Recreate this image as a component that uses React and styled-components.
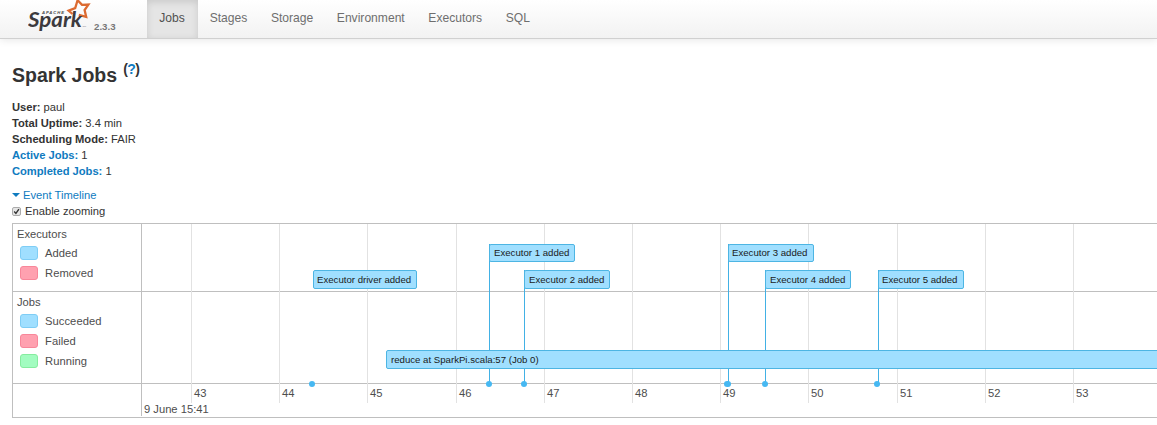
import React from "react";
import styled, { createGlobalStyle } from "styled-components";

const GlobalStyle = createGlobalStyle`
  * { box-sizing: border-box; }
  body {
    margin: 0;
    overflow: hidden;
    background: #fff;
    color: #333;
    font: 11.2px/16px "Liberation Sans", Arial, sans-serif;
  }
  b { letter-spacing: -0.03px; }
`;

const Navbar = styled.header`
  display: flex;
  height: 39px;
  padding-left: 28px;
  background: linear-gradient(to bottom, #fff, #f2f2f2);
  border-bottom: 1px solid #d0d0d0;
  box-shadow: 0 1px 8px rgba(0, 0, 0, 0.1);
`;

const Brand = styled.div`
  display: flex;
  width: 119px;
`;

const Logo = styled.svg`
  display: block;
  width: 64px;
  height: 38px;
`;

const Version = styled.span`
  margin: 19px 0 0 2px;
  font-size: 9.7px;
  font-weight: bold;
  color: #777;
`;

const Nav = styled.nav`
  display: flex;
`;

const NavItem = styled.a`
  padding: 0 11.8px;
  font-size: 12.1px;
  line-height: 36px;
  color: ${(p) => (p.$active ? "#505050" : "#6e6e6e")};
  background: ${(p) => (p.$active ? "#e5e5e5" : "none")};
  box-shadow: ${(p) => (p.$active ? "inset 0 2px 7px rgba(0, 0, 0, 0.125)" : "none")};
  &:first-child { padding: 0 13.1px 0 12.2px; }
`;

const Page = styled.main`
  padding: 24px 0 0 12px;
`;

const Title = styled.h3`
  display: flex;
  height: 36px;
  margin: 0;
  font-size: 19.5px;
  line-height: 24px;
`;

const Help = styled.sup`
  margin-left: 6px;
  font-size: 14px;
  line-height: 12px;
  letter-spacing: -0.6px;
  vertical-align: baseline;
`;

const Link = styled.a`
  color: #0f7bbf;
`;

const Summary = styled.ul`
  margin: 0 0 8px;
  padding: 0;
  list-style: none;
`;

const Toggle = styled.div`
  display: flex;
  align-items: center;
  height: 16px;
  color: #0f7bbf;
`;

const Caret = styled.span`
  margin-right: 3px;
  border: 4px solid transparent;
  border-top-color: #0f7bbf;
  border-bottom: 0;
`;

const ZoomOption = styled.label`
  display: flex;
  align-items: center;
  height: 16px;
  margin-bottom: 4px;
`;

const CheckMark = styled.svg`
  width: 9px;
  height: 9px;
  margin-right: 4px;
`;

const Timeline = styled.section`
  position: relative;
  width: 1200px;
  height: 195px;
  border: 1px solid #bfbfbf;
  color: #4d4d4d;
`;

const Group = styled.div`
  display: flex;
  height: ${(p) => p.$height}px;
  border-bottom: 1px solid #bfbfbf;
`;

const Legend = styled.div`
  width: 129px;
  padding: 2px 0 0 4px;
  border-right: 1px solid #bfbfbf;
`;

const AxisCorner = styled.div`
  width: 129px;
  height: 32px;
  border-right: 1px solid #bfbfbf;
`;

const LegendRow = styled.div`
  display: flex;
  align-items: center;
  height: 20px;
  padding-left: 3px;
  letter-spacing: 0.06px;
  &:first-of-type { margin-top: 1px; }
`;

const LegendTitle = styled.h4`
  margin: 0;
  font-size: 11.2px;
  font-weight: normal;
  line-height: 16px;
`;

const Swatch = styled.i`
  width: 18px;
  height: 14px;
  margin-right: 7px;
  border: 1px solid ${(p) => p.$edge};
  border-radius: 3px;
  background: ${(p) => p.$fill};
`;

/* Free canvas holding everything placed by time. */
const Canvas = styled.div`
  position: absolute;
  inset: 0;
`;

const GridLine = styled.div`
  position: absolute;
  top: 0;
  left: ${(p) => p.$x}px;
  width: 1px;
  height: 179px;
  background: #e2e2e2;
`;

const AxisLabel = styled.span`
  position: absolute;
  top: ${(p) => p.$y}px;
  left: ${(p) => p.$x}px;
  white-space: nowrap;
`;

const Stem = styled.div`
  position: absolute;
  top: ${(p) => p.$y}px;
  bottom: 33px;
  left: ${(p) => p.$x}px;
  width: 1px;
  background: #42b1e5;
`;

const Dot = styled.div`
  position: absolute;
  top: 157px;
  left: ${(p) => p.$x - 3}px;
  width: ${(p) => p.$w || 6}px;
  height: 6px;
  border-radius: 3px;
  background: #46b8f2;
`;

const Item = styled.div`
  position: absolute;
  top: ${(p) => p.$y}px;
  left: ${(p) => p.$x}px;
  width: ${(p) => p.$w}px;
  height: ${(p) => p.$h || 19}px;
  padding-left: ${(p) => p.$pad || 4}px;
  border: 1px solid #4db5e3;
  border-radius: 2px;
  background: #a0dfff;
  color: #1a1a1a;
  font-size: 9.65px;
  line-height: ${(p) => (p.$h || 19) - 2}px;
  white-space: nowrap;
`;

const blue = ["#a0dfff", "#7fcdf5"];
const red = ["#ffa1b0", "#f8879a"];
const green = ["#a2fcc0", "#86ec9f"];

const groups = [
  { title: "Executors", height: 68, rows: [["Added", blue], ["Removed", red]] },
  { title: "Jobs", height: 92, rows: [["Succeeded", blue], ["Failed", red], ["Running", green]] },
];

const ticks = [
  [43, 178], [44, 266], [45, 354], [46, 443], [47, 531], [48, 619],
  [49, 707], [50, 795], [51, 884], [52, 972], [53, 1060],
];

const events = [
  { name: "Executor driver added", x: 300, y: 46, w: 104, dot: 299, pad: 3 },
  { name: "Executor 1 added", x: 476, y: 20, w: 86, h: 18, dot: 476, stem: 476 },
  { name: "Executor 2 added", x: 511, y: 46, w: 86, dot: 511, stem: 511 },
  { name: "Executor 3 added", x: 715, y: 20, w: 86, h: 18, dot: 714, dotW: 7, stem: 715, pad: 3 },
  { name: "Executor 4 added", x: 752, y: 46, w: 86, dot: 752, stem: 752 },
  { name: "Executor 5 added", x: 865, y: 46, w: 86, dot: 864, stem: 865, pad: 3 },
];

const tabs = ["Jobs", "Stages", "Storage", "Environment", "Executors", "SQL"];

function SparkLogo() {
  return (
    <Logo viewBox="0 0 64 38">
      <path
        d="M44.5 14 L40.6 10.6 L47.2 8.2 L49.6 0.2 L54 4.9 L60.4 4.6 L56.6 10 L58.2 16.9 L50.8 14.9"
        fill="none"
        stroke="#dc6b32"
        strokeWidth="2.3"
        strokeLinejoin="miter"
      />
      <text x="14" y="13.9" fontSize="4.2" fontWeight="bold" fontStyle="italic" textLength="22" fill="#444" fontFamily="Liberation Sans">
        APACHE
      </text>
      <text x="0" y="27" fontSize="21" fontWeight="bold" fontStyle="italic" textLength="54" lengthAdjust="spacingAndGlyphs" fill="#3c3a3e" fontFamily="Lato, Liberation Sans">
        Spark
      </text>
      <text x="54.5" y="26.5" fontSize="2.5" fill="#777" fontFamily="Liberation Sans">TM</text>
    </Logo>
  );
}

export default function App() {
  return (
    <>
      <GlobalStyle />
      <Navbar>
        <Brand>
          <SparkLogo />
          <Version>2.3.3</Version>
        </Brand>
        <Nav>
          {tabs.map((t, i) => (
            <NavItem key={t} $active={i === 0}>{t}</NavItem>
          ))}
        </Nav>
      </Navbar>
      <Page>
        <Title>
          Spark Jobs
          <Help>(<Link>?</Link>)</Help>
        </Title>
        <Summary>
          <li><b>User:</b> paul</li>
          <li><b>Total Uptime:</b> 3.4 min</li>
          <li><b>Scheduling Mode:</b> FAIR</li>
          <li><Link><b>Active Jobs:</b></Link> 1</li>
          <li><Link><b>Completed Jobs:</b></Link> 1</li>
        </Summary>
        <Toggle><Caret />Event Timeline</Toggle>
        <ZoomOption>
          <CheckMark viewBox="0 0 9 9">
            <rect x="0.5" y="0.5" width="8" height="8" rx="1.5" fill="#e6e6e6" stroke="#ababab" />
            <path d="M2.2 4.6 L3.9 6.4 L6.9 2.2" fill="none" stroke="#333" strokeWidth="1.4" />
          </CheckMark>
          Enable zooming
        </ZoomOption>
        <Timeline>
          <Canvas>
            {ticks.map(([n, x]) => (
              <React.Fragment key={n}>
                <GridLine $x={x} />
                <AxisLabel $x={x + 3} $y={161}>{n}</AxisLabel>
              </React.Fragment>
            ))}
            <AxisLabel $x={131} $y={177}>9 June 15:41</AxisLabel>
            {events.map((e) => e.stem && <Stem key={e.name} $x={e.stem} $y={e.y} />)}
            {events.map((e) => (
              <Item key={e.name} $x={e.x} $y={e.y} $w={e.w} $h={e.h} $pad={e.pad}>{e.name}</Item>
            ))}
            <Item $x={373} $y={126} $w={820}>reduce at SparkPi.scala:57 (Job 0)</Item>
          </Canvas>
          {groups.map((g) => (
            <Group key={g.title} $height={g.height}>
              <Legend>
                <LegendTitle>{g.title}</LegendTitle>
                {g.rows.map(([label, [fill, edge]]) => (
                  <LegendRow key={label}>
                    <Swatch $fill={fill} $edge={edge} />
                    {label}
                  </LegendRow>
                ))}
              </Legend>
            </Group>
          ))}
          <AxisCorner />
          {events.map((e) => <Dot key={e.name} $x={e.dot} $w={e.dotW} />)}
        </Timeline>
      </Page>
    </>
  );
}
